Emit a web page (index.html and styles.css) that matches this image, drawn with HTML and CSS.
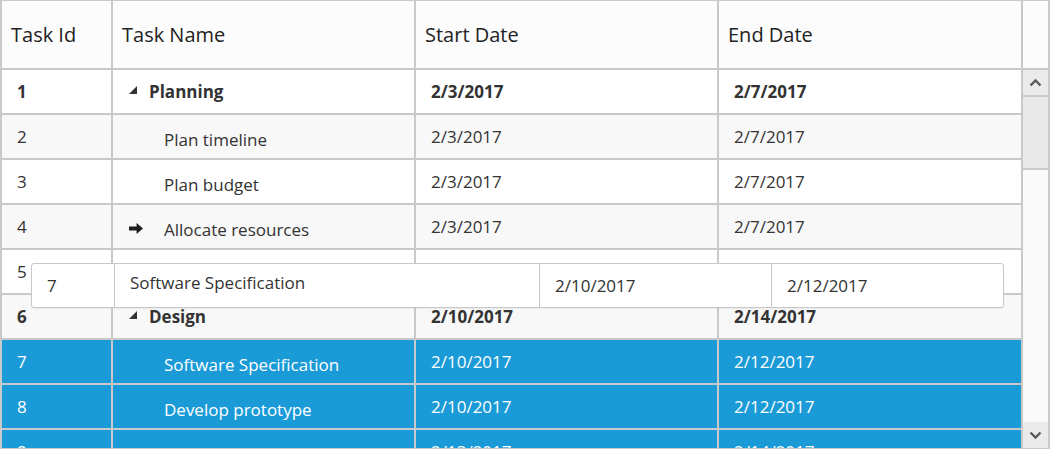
FILE: index.html
```html
<!DOCTYPE html>
<html>
<head>
<meta charset="utf-8">
<title>Tree Grid</title>
<link rel="stylesheet" href="styles.css">
</head>
<body>
<div class="grid">
  <div class="head">
    <div class="hc c1">Task Id</div>
    <div class="hc c2">Task Name</div>
    <div class="hc c3">Start Date</div>
    <div class="hc c4">End Date</div>
    <div class="hc cs"></div>
  </div>
  <div class="body">
    <div class="rows">
      <div class="row bold">
        <div class="cell c1">1</div>
        <div class="cell c2"><span class="expand"><svg width="8" height="8" viewBox="0 0 8 8"><polygon points="8,0 8,8 0,8" fill="#333"/></svg></span><span>Planning</span></div>
        <div class="cell c3">2/3/2017</div>
        <div class="cell c4">2/7/2017</div>
      </div>
      <div class="row alt">
        <div class="cell c1">2</div>
        <div class="cell c2"><span class="indent"></span><span class="child">Plan timeline</span></div>
        <div class="cell c3">2/3/2017</div>
        <div class="cell c4">2/7/2017</div>
      </div>
      <div class="row">
        <div class="cell c1">3</div>
        <div class="cell c2"><span class="indent"></span><span class="child">Plan budget</span></div>
        <div class="cell c3">2/3/2017</div>
        <div class="cell c4">2/7/2017</div>
      </div>
      <div class="row alt">
        <div class="cell c1">4</div>
        <div class="cell c2"><span class="indent arrow"><svg width="14" height="11" viewBox="0 0 14 11"><path d="M0 3.6H7.6V0L14 5.5L7.6 11V7.4H0Z" fill="#1e1e1e"/></svg></span><span class="child">Allocate resources</span></div>
        <div class="cell c3">2/3/2017</div>
        <div class="cell c4">2/7/2017</div>
      </div>
      <div class="row">
        <div class="cell c1">5</div>
        <div class="cell c2"><span class="indent"></span><span class="child">Planning complete</span></div>
        <div class="cell c3">2/7/2017</div>
        <div class="cell c4">2/7/2017</div>
      </div>
      <div class="row alt bold">
        <div class="cell c1">6</div>
        <div class="cell c2"><span class="expand"><svg width="8" height="8" viewBox="0 0 8 8"><polygon points="8,0 8,8 0,8" fill="#333"/></svg></span><span>Design</span></div>
        <div class="cell c3">2/10/2017</div>
        <div class="cell c4">2/14/2017</div>
      </div>
      <div class="row sel">
        <div class="cell c1">7</div>
        <div class="cell c2"><span class="indent"></span><span class="child">Software Specification</span></div>
        <div class="cell c3">2/10/2017</div>
        <div class="cell c4">2/12/2017</div>
      </div>
      <div class="row sel">
        <div class="cell c1">8</div>
        <div class="cell c2"><span class="indent"></span><span class="child">Develop prototype</span></div>
        <div class="cell c3">2/10/2017</div>
        <div class="cell c4">2/12/2017</div>
      </div>
      <div class="row sel">
        <div class="cell c1">9</div>
        <div class="cell c2"><span class="indent"></span><span class="child">Get approval from customer</span></div>
        <div class="cell c3">2/13/2017</div>
        <div class="cell c4">2/14/2017</div>
      </div>
    </div>
    <div class="vscroll">
      <div class="sbtn up"><svg width="13" height="9" viewBox="0 0 13 9"><path d="M1.5 7.5L6.5 2.5L11.5 7.5" fill="none" stroke="#5a5a5a" stroke-width="2.4"/></svg></div>
      <div class="thumb"></div>
      <div class="track"></div>
      <div class="sbtn down"><svg width="13" height="9" viewBox="0 0 13 9"><path d="M1.5 1.5L6.5 6.5L11.5 1.5" fill="none" stroke="#5a5a5a" stroke-width="2.4"/></svg></div>
    </div>
  </div>
  <div class="drag">
    <div class="dc d1">7</div>
    <div class="dc d2"><span class="dname">Software Specification</span></div>
    <div class="dc d3">2/10/2017</div>
    <div class="dc d4">2/12/2017</div>
  </div>
</div>
</body>
</html>
```
FILE: styles.css
```css
* { box-sizing: border-box; }
html, body { margin: 0; padding: 0; background: #fff; }
body { font-family: "Open Sans", "Noto Sans", sans-serif; color: #333; }

.grid {
  position: relative;
  width: 1050px;
  height: 449px;
  border-style: solid;
  border-color: #c9c9c9;
  border-width: 1px 2px 1px 2px;
  display: flex;
  flex-direction: column;
  overflow: hidden;
}

.head {
  display: flex;
  height: 69px;
  flex: none;
  background: #fcfcfc;
  border-bottom: 2px solid #c9c9c9;
}
.hc {
  display: flex;
  align-items: center;
  padding-left: 9px;
  font-size: 20px;
  color: #222;
  border-right: 2px solid #c9c9c9;
}
.hc.cs { border-right: 0; width: 25px; padding: 0; }

.c1 { width: 111px; }
.c2 { width: 303px; }
.c3 { width: 303px; }
.c4 { width: 304px; }

.body {
  flex: 1;
  display: flex;
  min-height: 0;
}
.rows {
  width: 1021px;
  overflow: hidden;
}
.row {
  display: flex;
  height: 45px;
  border-bottom: 2px solid #c9c9c9;
  background: #fff;
  font-size: 17px;
}
.row.alt { background: #f8f8f8; }
.row.bold { font-weight: 700; }
.row.sel { background: #1a9bd7; color: #fff; }

.cell {
  display: flex;
  align-items: center;
  padding-left: 15px;
  border-right: 2px solid #c9c9c9;
  white-space: nowrap;
  overflow: hidden;
}

.expand {
  width: 21px;
  flex: none;
  display: flex;
  align-items: center;
  padding-left: 1px;
  margin-bottom: 4px;
}
.indent {
  width: 36px;
  flex: none;
  display: flex;
  align-items: center;
}
.indent.arrow { padding-left: 1px; padding-top: 3px; }
.child { padding-top: 5px; }

.vscroll {
  width: 25px;
  display: flex;
  flex-direction: column;
  background: #fafafa;
}
.sbtn {
  display: flex;
  align-items: center;
  justify-content: center;
  background: #ebebeb;
  flex: none;
}
.sbtn.up { height: 27px; border-bottom: 2px solid #c9c9c9; }
.thumb { height: 73px; background: #e9e9e9; border-bottom: 2px solid #c9c9c9; flex: none; }
.track { flex: 1; }
.sbtn.down { height: 26px; }

.drag {
  position: absolute;
  left: 29px;
  top: 262px;
  width: 973px;
  height: 45px;
  background: #fff;
  border: 1px solid #c8c8c8;
  border-radius: 3px;
  display: flex;
  font-size: 17px;
  color: #333;
  box-shadow: 0 1px 2px rgba(0,0,0,0.06);
}
.dc {
  display: flex;
  align-items: center;
  padding-left: 15px;
  border-right: 1px solid #c8c8c8;
  white-space: nowrap;
}
.d1 { width: 83px; }
.d2 { width: 425px; }
.d3 { width: 232px; }
.d4 { flex: 1; border-right: 0; }
.dname { padding-bottom: 7px; }
```
